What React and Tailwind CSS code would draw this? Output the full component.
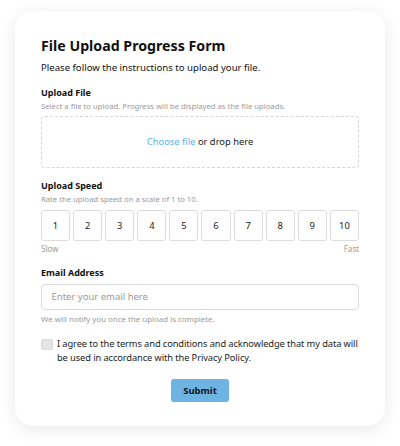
export default function App() {
  const nums = [1, 2, 3, 4, 5, 6, 7, 8, 9, 10];
  return (
    <div className="w-[400px] h-[446px] bg-white pt-[11px] px-[15px]" style={{ fontFamily: '"Noto Sans", sans-serif' }}>
      <div className="w-[370px] h-[415px] bg-white rounded-[18px] shadow-[0_3px_18px_rgba(0,0,0,0.09)] px-[26px] pt-[26px]">
        <h1 className="text-[14.2px] leading-[18px] font-bold text-[#111]">File Upload Progress Form</h1>
        <p className="text-[9.6px] leading-[13px] mt-[5.5px] text-[#111]">Please follow the instructions to upload your file.</p>

        <div className="mt-[13.7px]">
          <div className="text-[9px] leading-[12px] font-bold text-[#111]">Upload File</div>
          <div className="text-[7.7px] leading-[10px] mt-[1.8px] text-[#9a9a9a]">Select a file to upload. Progress will be displayed as the file uploads.</div>
          <div className="mt-[5px] h-[52px] border border-dashed border-[#d6d6d6] rounded-[4px] flex items-center justify-center text-[9.4px]">
            <span className="text-[#62b3ea]">Choose file</span>
            <span className="text-[#222] ml-[2.5px]">or drop here</span>
          </div>
        </div>

        <div className="mt-[12.5px]">
          <div className="text-[9px] leading-[12px] font-bold text-[#111]">Upload Speed</div>
          <div className="text-[7.7px] leading-[10px] mt-[1.5px] text-[#9a9a9a]">Rate the upload speed on a scale of 1 to 10.</div>
          <div className="mt-[6px] flex gap-[3px]">
            {nums.map((n) => (
              <div key={n} className="flex-1 h-[31.5px] border border-[#dcdcdc] rounded-[3px] flex items-center justify-center text-[9.4px] text-[#222]">
                {n}
              </div>
            ))}
          </div>
          <div className="flex justify-between text-[8px] leading-[10px] text-[#9a9a9a] mt-[2.5px]">
            <span>Slow</span>
            <span>Fast</span>
          </div>
        </div>

        <div className="mt-[13px]">
          <div className="text-[9px] leading-[12px] font-bold text-[#111]">Email Address</div>
          <div className="mt-[5px] h-[26px] border border-[#dcdcdc] rounded-[4px] flex items-center px-[9.5px] text-[9.5px] text-[#999]">
            Enter your email here
          </div>
          <div className="text-[7.9px] leading-[10px] text-[#9a9a9a] mt-[3.7px]">We will notify you once the upload is complete.</div>
        </div>

        <div className="mt-[13.3px] flex gap-[4.5px]">
          <div className="w-[11.5px] h-[11px] mt-[2px] shrink-0 rounded-[2px] bg-[#e4e4e4] border border-[#dadada]"></div>
          <p className="text-[9.3px] leading-[14.5px] tracking-[-0.1px] text-[#222] whitespace-nowrap">
            I agree to the terms and conditions and acknowledge that my data will
            <br />
            be used in accordance with the Privacy Policy.
          </p>
        </div>

        <div className="mt-[13px] flex justify-center">
          <div className="w-[58.6px] h-[23.4px] bg-[#6db4e3] rounded-[3px] flex items-center justify-center text-[9.5px] font-bold text-[#111]">Submit</div>
        </div>
      </div>
    </div>
  );
}
